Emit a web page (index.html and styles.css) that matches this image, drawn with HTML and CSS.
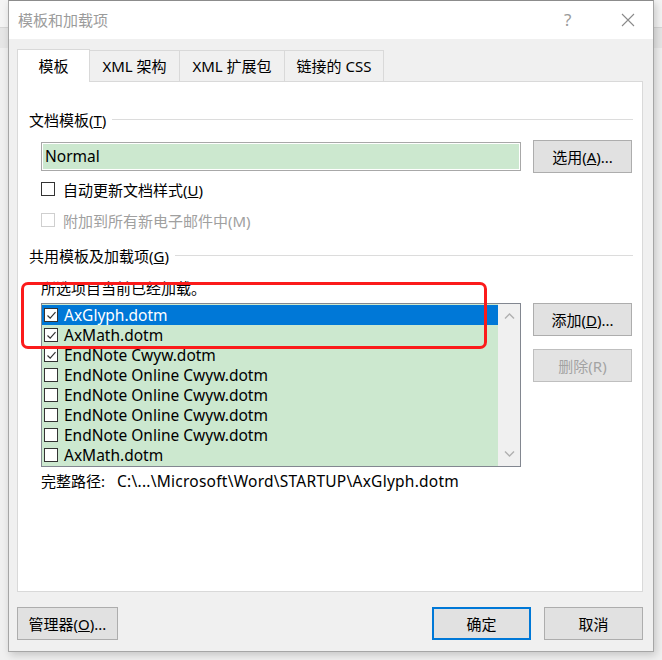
FILE: index.html
```html
<!DOCTYPE html>
<html lang="zh-CN">
<head>
<meta charset="utf-8">
<title>模板和加载项</title>
<link rel="stylesheet" href="styles.css">
</head>
<body>
<div class="desktop">
  <div class="window">
    <div class="titlebar">
      <span class="title">模板和加载项</span>
      <span class="help">?</span>
      <span class="close">
        <svg width="14" height="14" viewBox="0 0 14 14"><path d="M1 1L13 13M13 1L1 13" stroke="#8a8a8a" stroke-width="1.1" fill="none"/></svg>
      </span>
    </div>
    <div class="body">
      <div class="tabs">
        <div class="tab active">模板</div>
        <div class="tab">XML 架构</div>
        <div class="tab">XML 扩展包</div>
        <div class="tab">链接的 CSS</div>
      </div>
      <div class="panel">
        <div class="group g1"><span>文档模板(<u>T</u>)</span><i class="rule"></i></div>
        <div class="row tpl-row">
          <div class="textbox"><div class="tb-inner">Normal</div></div>
          <button class="btn">选用(<u>A</u>)...</button>
        </div>
        <div class="check c1"><span class="box"></span><span>自动更新文档样式(<u>U</u>)</span></div>
        <div class="check c2 disabled"><span class="box"></span><span>附加到所有新电子邮件中(M)</span></div>
        <div class="group g2"><span>共用模板及加载项(<u>G</u>)</span><i class="rule"></i></div>
        <div class="note">所选项目当前已经加载。</div>
        <div class="row list-row">
          <div class="listbox">
            <div class="items">
              <div class="item selected"><span class="box on"><svg width="11" height="11" viewBox="0 0 11 11"><path d="M1.5 5.5L4.2 8.2L9.5 2.2" stroke="#333" stroke-width="1.2" fill="none"/></svg></span><span>AxGlyph.dotm</span></div>
              <div class="item"><span class="box on"><svg width="11" height="11" viewBox="0 0 11 11"><path d="M1.5 5.5L4.2 8.2L9.5 2.2" stroke="#333" stroke-width="1.2" fill="none"/></svg></span><span>AxMath.dotm</span></div>
              <div class="item"><span class="box on"><svg width="11" height="11" viewBox="0 0 11 11"><path d="M1.5 5.5L4.2 8.2L9.5 2.2" stroke="#333" stroke-width="1.2" fill="none"/></svg></span><span>EndNote Cwyw.dotm</span></div>
              <div class="item"><span class="box"></span><span>EndNote Online Cwyw.dotm</span></div>
              <div class="item"><span class="box"></span><span>EndNote Online Cwyw.dotm</span></div>
              <div class="item"><span class="box"></span><span>EndNote Online Cwyw.dotm</span></div>
              <div class="item"><span class="box"></span><span>EndNote Online Cwyw.dotm</span></div>
              <div class="item"><span class="box"></span><span>AxMath.dotm</span></div>
            </div>
            <div class="scrollbar">
              <svg width="17" height="17" viewBox="0 0 17 17"><path d="M4 10.5L8.5 6L13 10.5" stroke="#b0b0b0" stroke-width="1.4" fill="none"/></svg>
              <svg width="17" height="17" viewBox="0 0 17 17"><path d="M4 6.5L8.5 11L13 6.5" stroke="#b0b0b0" stroke-width="1.4" fill="none"/></svg>
            </div>
          </div>
          <div class="side-btns">
            <button class="btn">添加(<u>D</u>)...</button>
            <button class="btn disabled">删除(R)</button>
          </div>
        </div>
        <div class="path"><span>完整路径:</span><span class="path-val">C:\...\Microsoft\Word\STARTUP\AxGlyph.dotm</span></div>
      </div>
      <div class="footer">
        <button class="btn">管理器(<u>O</u>)...</button>
        <div class="spacer"></div>
        <button class="btn default">确定</button>
        <button class="btn">取消</button>
      </div>
    </div>
  </div>
  <div class="highlight"></div>
</div>
</body>
</html>
```
FILE: styles.css
```css
* { box-sizing: border-box; }
html, body { margin: 0; padding: 0; }
body {
  width: 662px;
  height: 660px;
  overflow: hidden;
  background: #ececec;
  font-family: "Noto Sans", "Noto Sans CJK SC", sans-serif;
  font-size: 15px;
  color: #000;
}
.desktop {
  position: relative;
  width: 662px;
  height: 660px;
  background: linear-gradient(#f4f4f4 0 27px, #d6d6d6 27px 28px, #e6e6e6 28px 48px, #f0f0f0 48px);
}
.window {
  position: absolute;
  left: 8px;
  top: 0;
  width: 646px;
  height: 652px;
  border: 1px solid #a6a6a6;
  border-top-color: #8c8c8c;
  background: #f0f0f0;
  box-shadow: 2px 3px 8px rgba(0,0,0,0.18);
  display: flex;
  flex-direction: column;
}
.titlebar {
  height: 38px;
  background: #fff;
  display: flex;
  align-items: center;
  padding-left: 9px;
  padding-bottom: 1px;
  flex: none;
}
.title {
  color: #9b9b9b;
  font-size: 15px;
  flex: 1;
  font-family: "Noto Sans CJK SC", sans-serif;
}
.help {
  color: #9b9b9b;
  font-size: 17px;
  width: 14px;
  margin-right: 43px;
  font-family: "Noto Sans", sans-serif;
}
.close {
  width: 14px;
  height: 14px;
  margin-right: 18px;
  display: flex;
}
.body {
  flex: 1;
  padding: 10px 10px 0 8px;
  display: flex;
  flex-direction: column;
}
.tabs {
  display: flex;
  height: 32px;
  align-items: flex-end;
  position: relative;
  z-index: 1;
}
.tab {
  height: 31px;
  border: 1px solid #d9d9d9;
  border-bottom: none;
  border-left: none;
  background: #f0f0f0;
  display: flex;
  align-items: center;
  justify-content: center;
  font-size: 15px;
  padding-bottom: 1px;
}
.tab:nth-child(2) { width: 90px; }
.tab:nth-child(3) { width: 105px; }
.tab:nth-child(4) { width: 99px; }
.tab.active {
  width: 73px;
  height: 33px;
  background: #fff;
  border-left: 1px solid #d9d9d9;
  margin-bottom: -1px;
  padding-bottom: 2px;
}
.panel {
  width: 626px;
  height: 511px;
  background: #fff;
  border: 1px solid #d9d9d9;
  padding: 0 9px 0 11px;
  display: flex;
  flex-direction: column;
  flex: none;
}
.group {
  display: flex;
  align-items: center;
  height: 20px;
  line-height: 20px;
  white-space: nowrap;
}
.group .rule {
  flex: 1;
  height: 1px;
  background: #dcdcdc;
  margin-left: 6px;
  margin-top: -1px;
}
.g1 { margin-top: 28px; }
.g2 { margin-top: 16px; }
.row { display: flex; }
.tpl-row {
  margin-top: 10px;
  padding-left: 12px;
  align-items: center;
  height: 33px;
}
.textbox {
  width: 480px;
  height: 29px;
  border: 1px solid #a8a8a8;
  padding: 1px;
  background: #fff;
}
.tb-inner {
  height: 100%;
  background: #cce8cf;
  padding-left: 2px;
  line-height: 24px;
  font-size: 15.5px;
}
.btn {
  font-family: "Noto Sans", "Noto Sans CJK SC", sans-serif;
  font-size: 15px;
  color: #000;
  width: 99px;
  height: 33px;
  background: #e1e1e1;
  border: 1px solid #adadad;
  padding: 0;
  margin: 0;
}
.tpl-row .btn { margin-left: 12px; }
.btn.disabled { color: #a3a3a3; border-color: #bfbfbf; background: #e3e3e3; }
.btn.default { border: 2px solid #0078d7; }
.check {
  display: flex;
  align-items: center;
  height: 20px;
  padding-left: 12px;
}
.c1 { margin-top: 6px; }
.c2 { margin-top: 11px; }
.box {
  width: 14px;
  height: 14px;
  border: 1px solid #333;
  background: #fff;
  margin-right: 8px;
  flex: none;
  display: flex;
  align-items: center;
  justify-content: center;
}
.check.disabled { color: #a0a0a0; }
.check.disabled .box { border-color: #cfcfcf; }
.note {
  margin-top: 12px;
  padding-left: 12px;
  height: 20px;
  line-height: 20px;
}
.list-row {
  margin-top: 5px;
  padding-left: 12px;
}
.listbox {
  width: 480px;
  height: 164px;
  border: 1px solid #828790;
  display: flex;
  background: #fff;
}
.items {
  flex: 1;
  padding-top: 1px;
  background: #cce8cf;
}
.item {
  height: 20px;
  display: flex;
  align-items: center;
  padding-left: 2px;
  background: #cce8cf;
  white-space: nowrap;
  font-size: 15.5px;
}
.item .box { margin-right: 6px; width: 14px; height: 14px; }
.item.selected { background: #0078d7; color: #fff; }
.scrollbar {
  width: 22px;
  background: #f0f0f0;
  display: flex;
  flex-direction: column;
  justify-content: space-between;
  align-items: center;
  padding: 4px 0 4px;
}
.side-btns {
  margin-left: 12px;
  display: flex;
  flex-direction: column;
  gap: 13px;
}
.path {
  margin-top: 4px;
  padding-left: 12px;
  height: 20px;
  line-height: 20px;
  white-space: nowrap;
}
.path-val { margin-left: 12px; font-size: 15.5px; letter-spacing: 0.25px; }
.footer {
  display: flex;
  margin-top: 15px;
}
.footer .btn { width: 101px; }
.footer .btn.default { width: 99px; margin-right: 13px; }
.footer .btn:last-child { width: 99px; }
.spacer { flex: 1; }
.highlight {
  position: absolute;
  left: 21px;
  top: 282px;
  width: 466px;
  height: 67px;
  border: 3px solid #fb1b1b;
  border-radius: 7px;
  pointer-events: none;
}
```
